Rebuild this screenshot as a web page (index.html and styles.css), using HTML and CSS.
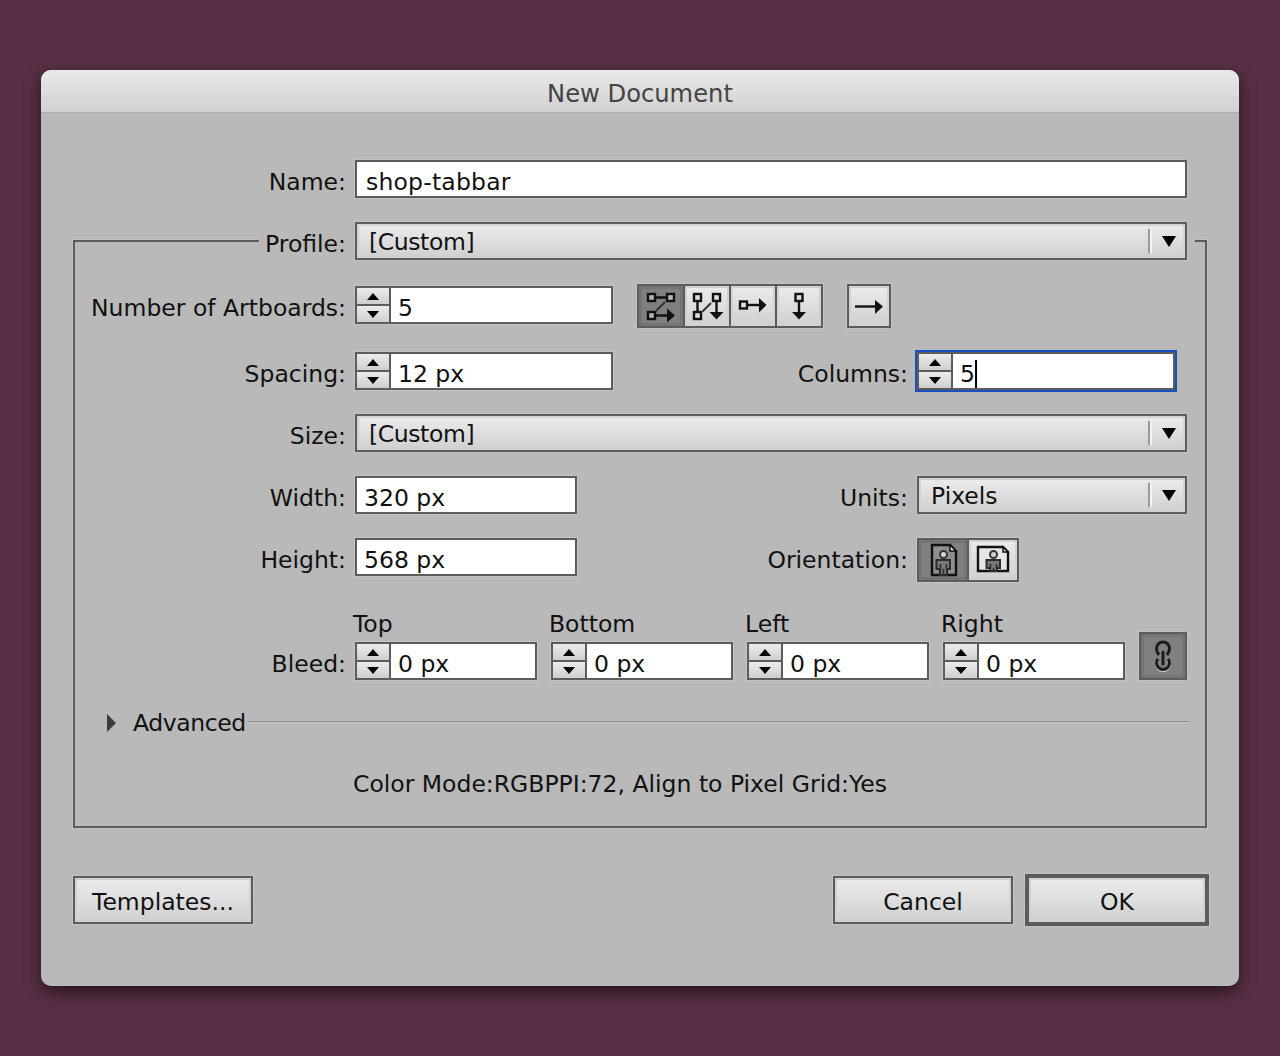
FILE: index.html
```html
<!DOCTYPE html>
<html lang="en">
<head>
    <meta charset="UTF-8">
    <title>New Document</title>
    <link rel="stylesheet" href="styles.css">
</head>
<body>

    <div class="dialog">
        <header class="titlebar">New Document</header>

        <div class="content">
            <div class="name-row">
                <span class="label">Name:</span>
                <div class="field name-field">shop-tabbar</div>
            </div>

            <div class="panel">
                <div class="row profile-row">
                    <span class="label profile-label">Profile:</span>
                    <div class="select wide">
                        <span class="select-text">[Custom]</span>
                        <span class="select-sep"></span>
                        <span class="select-arrow"></span>
                    </div>
                </div>

                <div class="row artboards-row">
                    <span class="label">Number of Artboards:</span>
                    <div class="spinner w258">
                        <div class="stepper"><span class="step up"></span><span class="step down"></span></div>
                        <div class="spin-value">5</div>
                    </div>
                    <div class="btn-group layout-group">
                        <div class="icon-btn active">
                            <svg width="44" height="40" viewBox="0 0 44 40">
                                <path d="M26 16L17 25" class="thin"/>
                                <path d="M17 11.500H27M17 29.500H30" class="line"/>
                                <rect x="9" y="8" width="7" height="7" class="sq"/>
                                <rect x="28" y="8" width="7" height="7" class="sq"/>
                                <rect x="9" y="26" width="7" height="7" class="sq"/>
                                <polygon points="28,22.500 36,29.500 28,36.500" class="head"/>
                            </svg>
                        </div>
                        <div class="icon-btn">
                            <svg width="44" height="40" viewBox="0 0 44 40">
                                <path d="M26 17L17.500 25.500" class="thin"/>
                                <path d="M12.500 16V25M31.500 16V28" class="line"/>
                                <rect x="9" y="8" width="7" height="7" class="sq"/>
                                <rect x="28" y="8" width="7" height="7" class="sq"/>
                                <rect x="9" y="26" width="7" height="7" class="sq"/>
                                <polygon points="24.500,26 38.500,26 31.500,33.500" class="head"/>
                            </svg>
                        </div>
                        <div class="icon-btn">
                            <svg width="44" height="40" viewBox="0 0 44 40">
                                <path d="M17 19H29" class="line"/>
                                <rect x="9" y="15.500" width="7" height="7" class="sq"/>
                                <polygon points="28,12 35.500,19 28,26.500" class="head"/>
                            </svg>
                        </div>
                        <div class="icon-btn">
                            <svg width="44" height="40" viewBox="0 0 44 40">
                                <path d="M22 16V28" class="line"/>
                                <rect x="18.500" y="8" width="7" height="7" class="sq"/>
                                <polygon points="15,26 29,26 22,33.500" class="head"/>
                            </svg>
                        </div>
                    </div>
                    <div class="btn-group single-group">
                        <div class="icon-btn single">
                            <svg width="40" height="40" viewBox="0 0 40 40">
                                <path d="M6 20.500H28" class="line"/>
                                <polygon points="26,14 34,20.500 26,28" class="head"/>
                            </svg>
                        </div>
                    </div>
                </div>

                <div class="row spacing-row">
                    <div class="col-left">
                        <span class="label">Spacing:</span>
                        <div class="spinner w258">
                            <div class="stepper"><span class="step up"></span><span class="step down"></span></div>
                            <div class="spin-value">12 px</div>
                        </div>
                    </div>
                    <span class="label-right">Columns:</span>
                    <div class="spinner w258 focused">
                        <div class="stepper"><span class="step up"></span><span class="step down"></span></div>
                        <div class="spin-value"><span class="caret">5</span></div>
                    </div>
                </div>

                <div class="row size-row">
                    <span class="label">Size:</span>
                    <div class="select wide">
                        <span class="select-text">[Custom]</span>
                        <span class="select-sep"></span>
                        <span class="select-arrow"></span>
                    </div>
                </div>

                <div class="row size-row">
                    <div class="col-left">
                        <span class="label">Width:</span>
                        <div class="field small-field">320 px</div>
                    </div>
                    <span class="label-right">Units:</span>
                    <div class="select units">
                        <span class="select-text">Pixels</span>
                        <span class="select-sep"></span>
                        <span class="select-arrow"></span>
                    </div>
                </div>

                <div class="row size-row orientation-row">
                    <div class="col-left">
                        <span class="label">Height:</span>
                        <div class="field small-field">568 px</div>
                    </div>
                    <span class="label-right">Orientation:</span>
                    <div class="btn-group">
                        <div class="icon-btn orient active">
                            <svg width="48" height="40" viewBox="0 0 48 40">
                                <path d="M13 5H31L37 11V35H13Z" class="doc"/>
                                <path d="M31 5V11H37Z" class="fold"/>
                                <path d="M17.500 20H31V29H28V35H21V29H17.500Z" class="body"/>
                                <path d="M21.500 24V29M27.500 24V29M24.500 29V35" class="body-line"/>
                                <circle cx="24.500" cy="14.500" r="3.500" class="head-ring"/>
                            </svg>
                        </div>
                        <div class="icon-btn orient">
                            <svg width="48" height="40" viewBox="0 0 48 40">
                                <path d="M9 7H34L39 12V31H9Z" class="doc"/>
                                <path d="M34 7V12H39Z" class="fold"/>
                                <path d="M17.500 20H31V28H28V31H21V28H17.500Z" class="body"/>
                                <path d="M21.500 24V28M27.500 24V28M24.500 28V31" class="body-line"/>
                                <circle cx="24.500" cy="14.500" r="3.500" class="head-ring"/>
                            </svg>
                        </div>
                    </div>
                </div>

                <div class="row bleed-row">
                    <span class="label">Bleed:</span>
                    <div class="bleed-col">
                        <span class="caption">Top</span>
                        <div class="spinner">
                            <div class="stepper"><span class="step up"></span><span class="step down"></span></div>
                            <div class="spin-value">0 px</div>
                        </div>
                    </div>
                    <div class="bleed-col">
                        <span class="caption">Bottom</span>
                        <div class="spinner">
                            <div class="stepper"><span class="step up"></span><span class="step down"></span></div>
                            <div class="spin-value">0 px</div>
                        </div>
                    </div>
                    <div class="bleed-col">
                        <span class="caption">Left</span>
                        <div class="spinner">
                            <div class="stepper"><span class="step up"></span><span class="step down"></span></div>
                            <div class="spin-value">0 px</div>
                        </div>
                    </div>
                    <div class="bleed-col">
                        <span class="caption">Right</span>
                        <div class="spinner">
                            <div class="stepper"><span class="step up"></span><span class="step down"></span></div>
                            <div class="spin-value">0 px</div>
                        </div>
                    </div>
                    <div class="link-btn">
                        <svg width="44" height="44" viewBox="0 0 44 44">
                            <path d="M17 26.500Q15.500 28 15.500 30A6.500 6.500 0 0 0 28.500 30Q28.500 28 27 26.500" class="chain-light"/>
                            <path d="M18 21Q15.500 18 15.500 14.500A6.500 6.500 0 0 1 28.500 14.500Q28.500 18 26 21" class="chain"/>
                            <path d="M17 25Q15.500 27 15.500 29A6.500 6.500 0 0 0 28.500 29Q28.500 27 27 25" class="chain"/>
                            <path d="M22 18V30" class="chain-bar"/>
                        </svg>
                    </div>
                </div>

                <div class="advanced-row">
                    <span class="disclosure"></span>
                    <span class="advanced-text">Advanced</span>
                    <span class="rule"></span>
                </div>

                <div class="summary">Color Mode:RGBPPI:72, Align to Pixel Grid:Yes</div>
            </div>

            <div class="buttons">
                <div class="button templates">Templates...</div>
                <div class="button cancel">Cancel</div>
                <div class="button ok">OK</div>
            </div>
        </div>
    </div>

</body>
</html>
```

FILE: styles.css
```css
html, body {
    margin: 0;
    padding: 0;
}
body {
    width: 1280px;
    height: 1056px;
    overflow: hidden;
    box-sizing: border-box;
    padding: 70px 41px 0;
    background-color: #572f44;
    font-family: "DejaVu Sans", sans-serif;
    font-size: 23.5px;
    color: #111;
}
.dialog {
    width: 1198px;
    height: 916px;
    border-radius: 10px;
    background-color: #b9b9b9;
    box-shadow: 0 6px 16px rgba(0, 0, 0, 0.55);
}
.titlebar {
    box-sizing: border-box;
    height: 43px;
    line-height: 48px;
    border-radius: 10px 10px 0 0;
    border-bottom: 1px solid #adadad;
    background: linear-gradient(#e9e9e9, #d1d1d1);
    color: #444;
    text-align: center;
    font-size: 24.2px;
}
.content {
    padding: 47px 32px 0;
}
.name-row {
    display: flex;
    margin-right: 20px;
}
.label {
    flex: none;
    width: 273px;
    height: 38px;
    margin-right: 9px;
    line-height: 44px;
    text-align: right;
    white-space: nowrap;
}
.field {
    box-sizing: border-box;
    height: 38px;
    padding-left: 7px;
    line-height: 40px;
    border: 2px solid #5c5c5c;
    background-color: #fff;
    box-shadow: 0 0 0 1px #c4c4c4;
    white-space: nowrap;
}
.name-field {
    flex: 1;
    padding-left: 9px;
    letter-spacing: 0.2px;
}
.small-field {
    width: 222px;
}

/* main box, the Profile row sits on its top line */
.panel {
    box-sizing: border-box;
    width: 1134px;
    height: 588px;
    margin-top: 42px;
    border: 2px solid #5c5c5c;
    box-shadow: 0 0 0 1px #c4c4c4;
}
.panel .label {
    width: 271px;
}
.row {
    display: flex;
    align-items: flex-start;
    margin-top: 24px;
}
.profile-row {
    width: 936px;
    margin: -20px 0 0 184px;
    background-color: #b9b9b9;
}
.panel .profile-label {
    width: 87px;
}
.artboards-row .label {
    margin-top: 2px;
}
.col-left {
    display: flex;
    width: 660px;
    flex: none;
}
.label-right {
    flex: none;
    width: 173px;
    height: 38px;
    margin-right: 9px;
    line-height: 44px;
    text-align: right;
    white-space: nowrap;
}
.select {
    display: flex;
    align-items: center;
    box-sizing: border-box;
    height: 38px;
    padding-left: 12px;
    border: 2px solid #5c5c5c;
    background: linear-gradient(#ececec, #cfcfcf);
    box-shadow: 0 0 0 1px #c4c4c4, inset 0 0 0 2px #d2d2d2;
}
.wide {
    width: 832px;
}
.wide .select-text {
    letter-spacing: -0.4px;
}
.units {
    width: 270px;
}
.select-text {
    flex: 1;
    line-height: 36px;
    padding-top: 1px;
}
.select-sep {
    width: 2px;
    height: 24px;
    margin-right: 10px;
    border-right: 2px solid #f4f4f4;
    background-color: #9a9a9a;
}
.select-arrow {
    width: 0;
    height: 0;
    margin-right: 9px;
    border-left: 7px solid transparent;
    border-right: 7px solid transparent;
    border-top: 11px solid #000;
}

.spinner {
    display: flex;
    flex: none;
    box-sizing: border-box;
    width: 182px;
    height: 38px;
    border: 2px solid #5c5c5c;
    background-color: #fff;
    box-shadow: 0 0 0 1px #c4c4c4;
}
.w258 {
    width: 258px;
}
.artboards-row .spinner {
    margin-top: 2px;
}
.focused {
    box-shadow: 0 0 0 2px #1a4fc0;
}
.stepper {
    display: flex;
    flex-direction: column;
    flex: none;
    width: 32px;
    border-right: 2px solid #5c5c5c;
}
.step {
    display: flex;
    align-items: center;
    justify-content: center;
    flex: 1;
    background: linear-gradient(#ececec, #cfcfcf);
}
.step.up {
    border-bottom: 2px solid #5c5c5c;
}
.step.up::before, .step.down::before {
    content: "";
    width: 0;
    height: 0;
    border-left: 6px solid transparent;
    border-right: 6px solid transparent;
}
.step.up::before {
    border-bottom: 7px solid #000;
}
.step.down::before {
    border-top: 7px solid #000;
}
.spin-value {
    padding-left: 7px;
    line-height: 40px;
    white-space: nowrap;
}
.caret {
    border-right: 2px solid #000;
}

.btn-group {
    display: flex;
    height: 40px;
    border: 2px solid #5c5c5c;
    box-shadow: 0 0 0 1px #c4c4c4;
}
.layout-group {
    margin-left: 24px;
}
.single-group {
    margin-left: 24px;
}
.icon-btn {
    width: 44px;
    height: 40px;
    background: linear-gradient(#ececec, #cfcfcf);
    box-shadow: inset 0 0 0 2px #d2d2d2;
}
.icon-btn + .icon-btn {
    border-left: 2px solid #5c5c5c;
}
.icon-btn.single {
    width: 40px;
}
.icon-btn.orient {
    width: 48px;
}
.icon-btn.active {
    background: #808080;
    box-shadow: inset 0 0 0 3px #747474;
}
.icon-btn svg {
    display: block;
}
.sq {
    fill: #e0e0e0;
    stroke: #111;
    stroke-width: 2.4;
}
.active .sq {
    fill: #b4b4b4;
}
.line {
    fill: none;
    stroke: #111;
    stroke-width: 2.4;
}
.thin {
    fill: none;
    stroke: #333;
    stroke-width: 2;
}
.head {
    fill: #111;
}
.doc {
    fill: #e6e6e6;
    stroke: #111;
    stroke-width: 2.4;
}
.active .doc {
    fill: #8e8e8e;
}
.fold {
    fill: #f4f4f4;
    stroke: #111;
    stroke-width: 1.5;
}
.head-ring {
    fill: #d4d4d4;
    stroke: #333;
    stroke-width: 2;
}
.body {
    fill: #777;
    stroke: #2c2c2c;
    stroke-width: 2;
}
.body-line {
    fill: none;
    stroke: #2c2c2c;
    stroke-width: 1.5;
}

.bleed-row {
    align-items: flex-end;
    margin-top: 30px;
}
.bleed-col {
    display: flex;
    flex-direction: column;
    margin-right: 14px;
}
.caption {
    height: 30px;
    margin-left: -2px;
    line-height: 24px;
}
.link-btn {
    box-sizing: border-box;
    width: 48px;
    height: 48px;
    border: 2px solid #5c5c5c;
    background-color: #808080;
    box-shadow: 0 0 0 1px #c4c4c4, inset 0 0 0 3px #747474;
}
.link-btn svg {
    display: block;
}
.chain {
    fill: none;
    stroke: #1c1c1c;
    stroke-width: 3;
}
.chain-light {
    fill: none;
    stroke: #d8d8d8;
    stroke-width: 3;
}
.chain-bar {
    stroke: #1c1c1c;
    stroke-width: 3;
    stroke-linecap: round;
}

.advanced-row {
    display: flex;
    align-items: center;
    height: 28px;
    margin-top: 29px;
    padding: 0 16px 0 32px;
}
.disclosure {
    width: 0;
    height: 0;
    margin-right: 17px;
    border-top: 9px solid transparent;
    border-bottom: 9px solid transparent;
    border-left: 9px solid #3c3c3c;
}
.advanced-text {
    line-height: 30px;
    letter-spacing: -0.4px;
}
.rule {
    flex: 1;
    height: 1px;
    margin: -2px 0 0 2px;
    background-color: #8b8b8b;
    border-bottom: 1px solid #c6c6c6;
}
.summary {
    margin: 32px 0 0 278px;
    line-height: 30px;
}

.buttons {
    display: flex;
    align-items: center;
    width: 1134px;
    height: 48px;
    margin-top: 48px;
}
.button {
    box-sizing: border-box;
    width: 180px;
    height: 48px;
    line-height: 49px;
    border: 2px solid #5c5c5c;
    background: linear-gradient(#ececec, #cfcfcf);
    box-shadow: 0 0 0 1px #c4c4c4, inset 0 0 0 2px #d2d2d2;
    text-align: center;
}
.cancel {
    margin-left: auto;
}
.ok {
    width: 184px;
    height: 52px;
    margin: 0 -2px 0 12px;
    line-height: 49px;
    border-width: 4px;
}
```
